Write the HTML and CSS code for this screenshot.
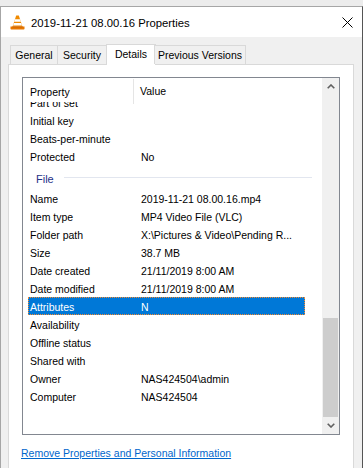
FILE: index.html
```html
<!DOCTYPE html>
<html>
<head>
<meta charset="utf-8">
<link rel="stylesheet" href="styles.css">
</head>
<body>
<div class="window">
  <div class="titlebar">
    <svg class="vlc" width="15" height="15" viewBox="0 0 15 15">
      <path d="M6.2 0.5 h2.6 l3.6 11 h-9.8 z" fill="#f08a00"/>
      <path d="M5 4.2 h5 l0.9 2.6 h-6.8 z" fill="#ffffff"/>
      <path d="M3.8 8 h7.4 l0.8 2.4 h-9 z" fill="#ffffff"/>
      <path d="M0.5 11.5 h14 v2.2 q0 0.8 -0.8 0.8 h-12.4 q-0.8 0 -0.8 -0.8 z" fill="#e87800"/>
      <path d="M2.2 11.5 h10.6 v0.9 h-10.6 z" fill="#c85f00"/>
    </svg>
    <span class="title">2019-11-21 08.00.16 Properties</span>
    <svg class="close" width="11" height="11" viewBox="0 0 11 11">
      <path d="M0.5 0.5 L10.5 10.5 M10.5 0.5 L0.5 10.5" stroke="#000" stroke-width="1" fill="none"/>
    </svg>
  </div>
  <div class="body">
    <div class="tabs">
      <div class="tab t-general">General</div>
      <div class="tab t-security">Security</div>
      <div class="tab t-details active">Details</div>
      <div class="tab t-prev">Previous Versions</div>
    </div>
    <div class="panel">
      <div class="listbox">
        <div class="list">
          <div class="header">
            <div class="hk">Property</div>
            <div class="hv">Value</div>
          </div>
          <div class="viewport">
            <div class="rows">
              <div class="row"><span class="k">Part of set</span><span class="v"></span></div>
              <div class="row"><span class="k">Initial key</span><span class="v"></span></div>
              <div class="row"><span class="k">Beats-per-minute</span><span class="v"></span></div>
              <div class="row"><span class="k">Protected</span><span class="v">No</span></div>
              <div class="group"><span class="gname">File</span><span class="gline"></span></div>
              <div class="row"><span class="k">Name</span><span class="v">2019-11-21 08.00.16.mp4</span></div>
              <div class="row"><span class="k">Item type</span><span class="v">MP4 Video File (VLC)</span></div>
              <div class="row"><span class="k">Folder path</span><span class="v">X:\Pictures &amp; Video\Pending R...</span></div>
              <div class="row"><span class="k">Size</span><span class="v">38.7 MB</span></div>
              <div class="row"><span class="k">Date created</span><span class="v">21/11/2019 8:00 AM</span></div>
              <div class="row"><span class="k">Date modified</span><span class="v">21/11/2019 8:00 AM</span></div>
              <div class="row selected"><span class="k">Attributes</span><span class="v">N</span></div>
              <div class="row"><span class="k">Availability</span><span class="v"></span></div>
              <div class="row"><span class="k">Offline status</span><span class="v"></span></div>
              <div class="row"><span class="k">Shared with</span><span class="v"></span></div>
              <div class="row"><span class="k">Owner</span><span class="v">NAS424504\admin</span></div>
              <div class="row"><span class="k">Computer</span><span class="v">NAS424504</span></div>
            </div>
          </div>
        </div>
        <div class="scrollbar">
          <div class="sbtn">
            <svg width="8" height="5" viewBox="0 0 8 5"><path d="M0.7 4.3 L4 1 L7.3 4.3" stroke="#606060" stroke-width="1.6" fill="none"/></svg>
          </div>
          <div class="strack"></div>
          <div class="sthumb"></div>
          <div class="sbtn">
            <svg width="8" height="5" viewBox="0 0 8 5"><path d="M0.7 0.7 L4 4 L7.3 0.7" stroke="#606060" stroke-width="1.6" fill="none"/></svg>
          </div>
        </div>
      </div>
      <a class="link" href="#">Remove Properties and Personal Information</a>
    </div>
  </div>
</div>
</body>
</html>
```

FILE: styles.css
```css
html, body {
  margin: 0;
  padding: 0;
}
body {
  background: #ececec;
  font-family: "Liberation Sans", Arial, sans-serif;
  font-size: 10.5px;
  color: #000;
  width: 363px;
  height: 468px;
  overflow: hidden;
}
.window {
  margin-top: 6px;
  width: 363px;
  height: 470px;
  box-sizing: border-box;
  border: 1px solid #a6a6a6;
  border-right-color: #555555;
  border-bottom: none;
  background: #f0f0f0;
  overflow: hidden;
}
.titlebar {
  height: 30px;
  background: #fff;
  display: flex;
  align-items: center;
  padding-left: 9px;
  padding-right: 9px;
}
.vlc {
  display: block;
  margin-top: 1px;
  flex-shrink: 0;
}
.title {
  font-size: 11.3px;
  margin-left: 6px;
  flex: 1;
  padding-top: 1px;
}
.close {
  display: block;
  flex-shrink: 0;
}
.body {
  padding-top: 7px;
}
.tabs {
  display: flex;
  align-items: flex-end;
  padding-left: 9px;
  height: 21px;
  margin-bottom: -1px;
  position: relative;
  z-index: 1;
}
.tab {
  height: 19px;
  box-sizing: border-box;
  border: 1px solid #d9d9d9;
  border-bottom: none;
  line-height: 18px;
  text-align: center;
  background: #f0f0f0;
  margin-left: -1px;
  margin-bottom: 1px;
  white-space: nowrap;
}
.t-general {
  margin-left: 0;
  width: 48px;
}
.t-security {
  width: 50px;
}
.t-details {
  width: 50px;
}
.t-prev {
  width: 92px;
  margin-left: -2px;
}
.tab.active {
  height: 21px;
  background: #fff;
  margin-bottom: 0;
  line-height: 19px;
}
.panel {
  margin-left: 7px;
  width: 346px;
  box-sizing: border-box;
  border: 1px solid #d9d9d9;
  border-bottom: none;
  background: #fff;
  padding: 12px 13px 0 13px;
  height: 420px;
}
.listbox {
  width: 318px;
  height: 358px;
  box-sizing: border-box;
  border: 1px solid #828790;
  display: flex;
}
.list {
  width: 299px;
  display: flex;
  flex-direction: column;
}
.header {
  height: 24px;
  display: flex;
  flex-shrink: 0;
}
.hk {
  width: 111px;
  box-sizing: border-box;
  padding-left: 7px;
  padding-top: 2px;
  line-height: 22px;
  border-right: 1px solid #e5e5e5;
  margin-top: 1px;
  height: 25px;
}
.hv {
  padding-left: 6px;
  padding-top: 2px;
  line-height: 22px;
}
.viewport {
  flex: 1;
  overflow: hidden;
}
.rows {
  margin-top: -9px;
}
.row {
  height: 18px;
  box-sizing: border-box;
  padding-top: 1px;
  line-height: 18px;
  display: flex;
  white-space: nowrap;
}
.k {
  width: 112px;
  box-sizing: border-box;
  padding-left: 7px;
}
.v {
  padding-left: 6px;
}
.row.selected {
  margin-left: 5px;
  width: 277px;
  padding-top: 0;
  background: #0078d7;
  color: #fff;
  border: 1px dotted #f5892e;
  line-height: 18px;
}
.row.selected .k {
  width: 106px;
  padding-left: 1px;
}
.group {
  height: 24px;
  display: flex;
  align-items: center;
  padding-left: 13px;
  padding-right: 10px;
}
.gname {
  color: #1e3287;
  font-size: 11px;
  padding-top: 3px;
}
.gline {
  flex: 1;
  height: 1px;
  background: #e2e6ef;
  margin-left: 10px;
  margin-top: 1px;
}
.scrollbar {
  width: 17px;
  background: #f0f0f0;
  display: flex;
  flex-direction: column;
}
.sbtn {
  height: 17px;
  flex-shrink: 0;
  display: flex;
  align-items: center;
  justify-content: center;
}
.sbtn svg {
  display: block;
}
.strack {
  flex: 1;
}
.sthumb {
  height: 99px;
  flex-shrink: 0;
  margin: 0 1px;
  background: #cdcdcd;
}
.link {
  display: block;
  margin-top: 11px;
  color: #0066cc;
  text-decoration: underline;
  line-height: 14px;
  margin-left: -1px;
}
```
